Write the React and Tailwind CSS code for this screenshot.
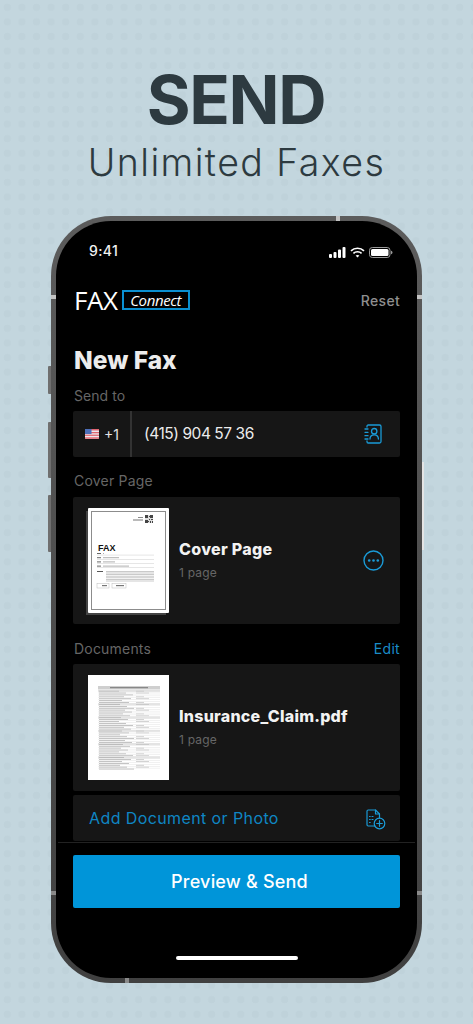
const M = { fontFamily: 'Inter, "Open Sans", sans-serif' };

function Signal() {
  return (
    <svg width="17" height="11" viewBox="0 0 17 11" fill="#fff">
      <rect x="0" y="7" width="3" height="4" rx="1" />
      <rect x="4.5" y="5" width="3" height="6" rx="1" />
      <rect x="9" y="2.5" width="3" height="8.5" rx="1" />
      <rect x="13.5" y="0" width="3" height="11" rx="1" />
    </svg>
  );
}
function Wifi() {
  return (
    <svg width="15" height="11" viewBox="0 0 15 11" fill="none" stroke="#fff" strokeWidth="1.7">
      <path d="M1 3.8C4.6 0.4 10.4 0.4 14 3.8" />
      <path d="M3.4 6.3C5.7 4.2 9.3 4.2 11.6 6.3" />
      <path d="M7.5 10.6 5.6 8.6C6.7 7.7 8.3 7.7 9.4 8.6Z" fill="#fff" stroke="none" />
    </svg>
  );
}
function Battery() {
  return (
    <svg width="24" height="11" viewBox="0 0 24 11">
      <rect x="0.5" y="0.5" width="20.5" height="10" rx="2.8" fill="none" stroke="#9a9a9a" />
      <rect x="2" y="2" width="17.5" height="7" rx="1.5" fill="#fff" />
      <path d="M22 3.8c1 .3 1.5 1 1.5 1.7s-.5 1.4-1.5 1.7Z" fill="#9a9a9a" />
    </svg>
  );
}
function Flag() {
  return (
    <svg width="14" height="10" viewBox="0 0 14 10">
      <rect width="14" height="10" rx="1" fill="#ece9ee" />
      <rect y="0" width="14" height="1.5" fill="#e0656f" />
      <rect y="3" width="14" height="1.3" fill="#e0656f" />
      <rect y="5.6" width="14" height="1.3" fill="#e0656f" />
      <rect y="8.3" width="14" height="1.5" fill="#e0656f" />
      <rect width="6.5" height="5" fill="#4d6fb8" />
    </svg>
  );
}
function ContactBook() {
  return (
    <svg width="18" height="20" viewBox="0 0 18 20" fill="none" stroke="#1a9bd7" strokeWidth="1.3" strokeLinecap="round" strokeLinejoin="round">
      <path d="M3 3V2.2C3 1.5 3.5 1 4.2 1H15.5C16.3 1 17 1.7 17 2.5V17.5C17 18.3 16.3 19 15.5 19H4.2C3.5 19 3 18.5 3 17.8V17" />
      <path d="M1 5H4M1 8.3H4M1 11.7H4M1 15H4" />
      <circle cx="10.2" cy="7.2" r="2.7" />
      <path d="M6 15C6 12.4 7.8 10.8 10.2 10.8S14.4 12.4 14.4 15" />
    </svg>
  );
}
function MoreCircle() {
  return (
    <svg width="21" height="21" viewBox="0 0 21 21" fill="none">
      <circle cx="10.5" cy="10.5" r="9.5" stroke="#1a9bd7" strokeWidth="1.4" />
      <circle cx="6.2" cy="10.5" r="1.3" fill="#1a9bd7" />
      <circle cx="10.5" cy="10.5" r="1.3" fill="#1a9bd7" />
      <circle cx="14.8" cy="10.5" r="1.3" fill="#1a9bd7" />
    </svg>
  );
}
function FilePlus() {
  return (
    <svg width="20" height="21" viewBox="0 0 20 21" fill="none" stroke="#1a9bd7" strokeWidth="1.2" strokeLinecap="round" strokeLinejoin="round">
      <path d="M9 17H2.2C1.5 17 1 16.5 1 15.8V2.2C1 1.5 1.5 1 2.2 1H9.5L13.5 5V9" />
      <path d="M9.5 1V5H13.5" />
      <path d="M3.5 7.5H4.2M6 7.5H7M3.5 10.5H4.2M6 10.5H7M3.5 13.5H4.2" />
      <circle cx="13.5" cy="14.5" r="5.3" />
      <path d="M13.5 11.7V17.3M10.7 14.5H16.3" />
    </svg>
  );
}
function CoverContent() {
  const rows = [0, 1, 2, 3];
  const qr = [
    [0, 0, 3, 3], [5, 0, 3, 3], [0, 5, 3, 3], [4, 4, 1, 1], [6, 4, 2, 1], [5, 6, 1, 2], [7, 6, 1, 2], [4, 1, 1, 1], [3, 6, 1, 1],
  ];
  return (
    <svg width="66" height="88" viewBox="0 0 66 88" className="block">
      <g transform="translate(53 0)">
        <rect width="8" height="8" fill="#ddd" />
        {qr.map((q, i) => (
          <rect key={i} x={q[0]} y={q[1]} width={q[2]} height={q[3]} fill="#444" />
        ))}
      </g>
      <rect x="46" y="2" width="5" height="1" fill="#888" />
      <rect x="41" y="4.5" width="10" height="1" fill="#777" />
      {rows.map((r) => (
        <g key={r}>
          <rect x="5" y={38 + r * 4.2} width="4" height="1" fill="#666" />
          <rect x="11" y={38 + r * 4.2} width={[1, 16, 12, 26][r]} height="1" fill="#b0b0b0" />
          <rect x="5" y={39.8 + r * 4.2} width="57" height="0.5" fill="#ccc" />
        </g>
      ))}
      <rect x="5" y="56" width="6" height="1" fill="#555" />
      {[0, 1, 2, 3, 4, 5, 6].map((r) => (
        <rect key={r} x="14" y={56 + r * 1.6} width="48" height="0.8" fill="#bdbdbd" />
      ))}
      <rect x="5" y="68.5" width="12" height="4.5" fill="none" stroke="#bbb" strokeWidth="0.5" />
      <rect x="20" y="68.5" width="14" height="4.5" fill="none" stroke="#bbb" strokeWidth="0.5" />
      <rect x="10" y="70" width="5" height="1.2" fill="#777" />
      <rect x="24" y="70" width="8" height="1.2" fill="#777" />
    </svg>
  );
}
function ClaimContent() {
  const ys = Array.from({ length: 42 }, (_, i) => i);
  return (
    <svg width="62" height="84" viewBox="0 0 62 84" className="block">
      <rect x="0" y="0" width="62" height="3.5" fill="#cfcfcf" />
      <rect x="12" y="1.2" width="38" height="1" fill="#777" />
      {ys.map((i) => (
        <g key={i}>
          {i % 7 === 0 && <rect x="0" y={4 + i * 1.9} width="62" height="1.9" fill="#e4e4e4" />}
          <rect x="0" y={4 + i * 1.9} width="62" height="0.4" fill="#dcdcdc" />
          <rect x="1" y={4.8 + i * 1.9} width={20 + ((i * 7) % 16)} height="0.7" fill="#ababab" />
          {i % 3 !== 2 && <rect x="38" y={4.8 + i * 1.9} width={8 + ((i * 5) % 15)} height="0.7" fill="#c0c0c0" />}
        </g>
      ))}
    </svg>
  );
}

export default function App() {
  return (
    <div
      style={M}
      className="w-[473px] h-[1024px] overflow-hidden bg-[#c3d6de] bg-[radial-gradient(circle,#bfd2da_3.5px,transparent_4px)] bg-[size:14.6px_14.6px] flex flex-col items-center"
    >
      <h1 className="mt-[60px] h-[80px] leading-[80px] text-[67px] font-bold text-[#2d3a40] tracking-[-1.4px] -ml-[1px]">SEND</h1>
      <p className="mt-[1px] h-[44px] leading-[44px] text-[37.5px] font-light text-[#2d3a40] tracking-[1.4px]">Unlimited Faxes</p>

      <div className="relative mt-[31px] w-[371px] h-[767px]">
        {/* side buttons */}
        <div className="absolute left-[-3px] top-[150px] w-[3px] h-[28px] bg-[#6f6f6f] rounded-l-[1px]" />
        <div className="absolute left-[-3px] top-[206px] w-[3px] h-[56px] bg-[#6f6f6f] rounded-l-[1px]" />
        <div className="absolute left-[-3px] top-[279px] w-[3px] h-[57px] bg-[#6f6f6f] rounded-l-[1px]" />
        <div className="absolute right-[-2px] top-[246px] w-[2px] h-[88px] bg-[#e4e4e4]" />

        <div className="w-full h-full rounded-[60px] bg-gradient-to-b from-[#5c5c5c] to-[#404040] p-[5px] relative">
          {/* antenna bands */}
          <div className="absolute left-[285px] top-0 w-[4px] h-[5px] bg-[#c4c4c4]" />
          <div className="absolute left-[74px] bottom-0 w-[4px] h-[5px] bg-[#8a8a8a]" />
          <div className="absolute left-0 top-[79px] w-[5px] h-[4px] bg-[#c4c4c4]" />
          <div className="absolute right-0 top-[79px] w-[5px] h-[4px] bg-[#c4c4c4]" />
          <div className="absolute left-0 top-[675px] w-[5px] h-[4px] bg-[#8a8a8a]" />
          <div className="absolute right-0 top-[675px] w-[5px] h-[4px] bg-[#8a8a8a]" />

          <div className="relative w-full h-full rounded-[55px] bg-black overflow-hidden flex flex-col">
            {/* status bar */}
            <div className="flex items-center justify-between pl-[33px] pr-[24px] pt-[13px] h-[46px]">
              <span className="text-[14px] font-medium text-[#f2f2f2] tracking-[0.4px]">9:41</span>
              <div className="flex items-center gap-[4px] mt-[3px]">
                <Signal />
                <Wifi />
                <Battery />
              </div>
            </div>

            <div className="px-[17px]">
              {/* logo row */}
              <div className="flex items-center justify-between mt-[22px] h-[22px]">
                <div className="flex items-center gap-[4px] ml-[1px]">
                  <span style={{ fontFamily: '"Open Sans", sans-serif' }} className="text-[26px] leading-none font-normal text-white tracking-[-0.4px]">FAX</span>
                  <div className="w-[68px] h-[20px] border-2 border-[#0a8fd0] flex items-center justify-center">
                    <span style={{ fontFamily: '"Open Sans", sans-serif' }} className="text-[15px] italic font-normal text-white tracking-[-0.4px] leading-none">Connect</span>
                  </div>
                </div>
                <span className="text-[14px] font-medium text-[#8f8f8f] tracking-[0.3px]">Reset</span>
              </div>

              <h2 className="mt-[34px] h-[30px] leading-[30px] text-[24.5px] font-extrabold text-[#ececec] ml-[1px]">New Fax</h2>

              <p className="mt-[11px] h-[20px] leading-[20px] text-[14px] text-[#666] ml-[1px] tracking-[0.05px]">Send to</p>
              <div className="mt-[5px] h-[46px] bg-[#161616] rounded-[2px] flex items-center">
                <div className="w-[57px] h-full flex items-center gap-[5px] pl-[12px]">
                  <Flag />
                  <span className="text-[14px] text-[#e4e4e4]">+1</span>
                </div>
                <div className="w-[2px] h-full bg-[#333]" />
                <span className="ml-[12px] flex-1 text-[15.5px] text-[#ececec] tracking-[-0.45px]">(415) 904 57 36</span>
                <div className="mr-[18px]"><ContactBook /></div>
              </div>

              <p className="mt-[14px] h-[20px] leading-[20px] text-[14px] text-[#666] ml-[1px] tracking-[0.2px]">Cover Page</p>
              <div className="mt-[6px] h-[127px] bg-[#161616] rounded-[2px] flex items-center pl-[15px] pr-[16px]">
                <div className="relative w-[80px] h-[104px] mr-[11px] -mt-[1px]">
                  <div className="absolute left-[-2px] top-[3px] w-[80px] h-[104px] bg-[#444]" />
                  <div className="relative w-[81px] h-[105px] bg-white rounded-[1px] p-[3px]">
                    <div className="relative w-full h-full border border-[#8c8c8c] overflow-hidden">
                      <div className="absolute left-0 top-[3px]"><CoverContent /></div>
                      <span style={{ fontFamily: '"Liberation Sans", sans-serif' }} className="absolute left-[6px] top-[32px] text-[9px] leading-none font-bold text-[#111]">FAX</span>
                    </div>
                  </div>
                </div>
                <div className="flex-1">
                  <p className="text-[16px] font-extrabold text-[#f2f2f2] leading-[20px] tracking-[0.3px] mt-[-2px]">Cover Page</p>
                  <p className="mt-[6px] text-[12px] text-[#666] leading-[16px] tracking-[0.2px]">1 page</p>
                </div>
                <div className="-mt-[1px]"><MoreCircle /></div>
              </div>

              <div className="mt-[14px] h-[20px] flex items-center justify-between">
                <span className="text-[14px] text-[#666] ml-[1px] tracking-[0.2px]">Documents</span>
                <span className="text-[14px] text-[#1a8cc8] tracking-[0.3px]">Edit</span>
              </div>
              <div className="mt-[6px] h-[127px] bg-[#161616] rounded-[2px] flex items-center pl-[15px]">
                <div className="w-[81px] h-[105px] bg-white flex items-center justify-center mr-[10px]">
                  <ClaimContent />
                </div>
                <div className="flex-1">
                  <p className="text-[16px] font-extrabold text-[#f2f2f2] leading-[20px] tracking-[0.25px] mt-[-2px]">Insurance_Claim.pdf</p>
                  <p className="mt-[6px] text-[12px] text-[#666] leading-[16px] tracking-[0.2px]">1 page</p>
                </div>
              </div>
              <div className="mt-[4px] h-[46px] bg-[#161616] rounded-[2px] flex items-center justify-between pl-[16px] pr-[14px]">
                <span className="text-[16px] text-[#0f86c4] tracking-[0.4px]">Add Document or Photo</span>
                <div className="mt-[3px]"><FilePlus /></div>
              </div>
            </div>

            <div className="mt-[1px] mx-[2px] h-[1px] bg-[#222]" />
            <div className="px-[17px] mt-[12px]">
              <button className="w-full h-[53px] bg-[#0095d9] rounded-[2px] text-[18px] font-medium text-white tracking-[0.2px] pl-[6px]">Preview &amp; Send</button>
            </div>
            <div className="mt-[48px] mx-auto w-[122px] h-[4px] rounded-full bg-white" />
          </div>
        </div>
      </div>
    </div>
  );
}
